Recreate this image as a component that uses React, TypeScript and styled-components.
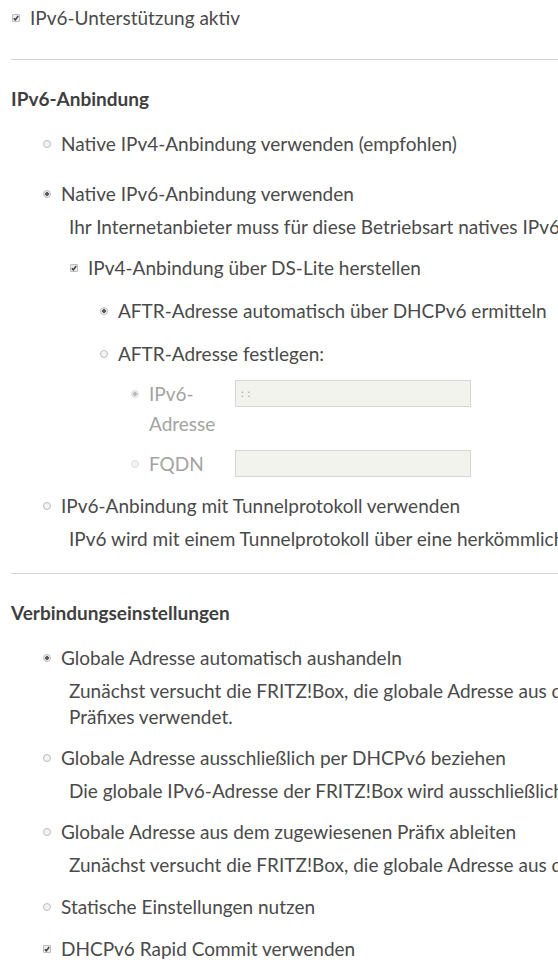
import React from 'react';
import styled, { createGlobalStyle } from 'styled-components';

const GlobalStyle = createGlobalStyle`
  html, body {
    margin: 0;
    padding: 0;
    background: #ffffff;
    overflow: hidden;
  }
  body {
    font-family: Lato, 'Open Sans', sans-serif;
    color: #4a4a4a;
    font-size: 19px;
  }
`;

const Page = styled.div`
  width: 100vw;
  overflow: hidden;
  padding: 3px 0 0 11px;
  box-sizing: border-box;
`;

const Divider = styled.hr<{ $top?: number }>`
  border: 0;
  border-top: 1px solid #d4d4d4;
  margin: ${(p) => p.$top ?? 26}px 0 0 0;
  width: 100%;
`;

const Heading = styled.h3`
  margin: 24px 0 0 0;
  font-size: 19px;
  line-height: 30px;
  font-weight: 700;
  color: #3f3f3f;
`;

const Group = styled.div<{ $indent: number; $first?: boolean }>`
  margin-left: ${(p) => p.$indent}px;
  margin-top: ${(p) => (p.$first ? 15 : 0)}px;
`;

const Option = styled.label<{ $disabled?: boolean; $top?: number }>`
  display: flex;
  align-items: flex-start;
  margin-top: ${(p) => p.$top ?? 13}px;
  line-height: 30px;
  color: ${(p) => (p.$disabled ? '#a3a3a3' : '#4a4a4a')};
  white-space: nowrap;
`;

const ControlBox = styled.span`
  flex: none;
  width: 8px;
  height: 30px;
  margin-right: 10px;
  display: flex;
  align-items: center;
`;

const Radio = styled.span<{ $checked?: boolean; $disabled?: boolean }>`
  width: 8px;
  height: 8px;
  box-sizing: border-box;
  border-radius: 50%;
  border: 1px solid ${(p) => (p.$disabled ? '#dddddd' : '#bdbdbd')};
  background: ${(p) =>
    p.$checked
      ? `radial-gradient(circle, ${p.$disabled ? '#bbbbbb' : '#5a5a5a'} 0 1.6px, #e9e9e9 2px)`
      : '#f3f3f3'};
`;

const Check = styled.span`
  width: 8px;
  height: 8px;
  box-sizing: border-box;
  border: 1px solid #bdbdbd;
  border-radius: 1px;
  background: #ececec;
  display: flex;
  align-items: center;
  justify-content: center;
  svg {
    display: block;
  }
`;

const Description = styled.div<{ $bottom?: number }>`
  margin: 5px 0 ${(p) => p.$bottom ?? 2}px 26px;
  line-height: 26px;
  white-space: nowrap;
`;

const FieldRow = styled.div<{ $top: number }>`
  display: flex;
  align-items: flex-start;
  margin-top: ${(p) => p.$top}px;
  color: #a3a3a3;
  line-height: 30px;
`;

const FieldLabel = styled.span`
  width: 76px;
  margin-right: 10px;
  flex: none;
`;

const Input = styled.input`
  width: 236px;
  height: 27px;
  box-sizing: border-box;
  margin-top: 1px;
  border: 1px solid #d6d6d2;
  background: #f3f3ee;
  padding: 0 3px;
  font-family: 'DejaVu Sans Mono', monospace;
  font-size: 11px;
  color: #b5b5b5;
  &::placeholder {
    color: #b5b5b5;
  }
`;

const CheckIcon = () => (
  <Check>
    <svg width="6" height="6" viewBox="0 0 6 6">
      <path d="M0.8 3.2 L2.3 4.8 L5.2 1" stroke="#3a3a3a" strokeWidth="1.4" fill="none" />
    </svg>
  </Check>
);

type RadioOptionProps = {
  checked?: boolean;
  disabled?: boolean;
  top?: number;
  children: React.ReactNode;
};

const RadioOption = ({ checked, disabled, top, children }: RadioOptionProps) => (
  <Option $disabled={disabled} $top={top}>
    <ControlBox>
      <Radio $checked={checked} $disabled={disabled} />
    </ControlBox>
    <span>{children}</span>
  </Option>
);

const CheckOption = ({ children, top }: { children: React.ReactNode; top?: number }) => (
  <Option $top={top}>
    <ControlBox>
      <CheckIcon />
    </ControlBox>
    <span>{children}</span>
  </Option>
);

export default function App() {
  return (
    <>
      <GlobalStyle />
      <Page>
        <Group $indent={1}>
          <CheckOption top={0}>IPv6-Unterstützung aktiv</CheckOption>
        </Group>
        <Divider />

        <Heading>IPv6-Anbindung</Heading>
        <Group $indent={32} $first>
          <RadioOption top={0}>Native IPv4-Anbindung verwenden (empfohlen)</RadioOption>
          <RadioOption checked top={20}>
            Native IPv6-Anbindung verwenden
          </RadioOption>
          <Description>
            Ihr Internetanbieter muss für diese Betriebsart natives IPv6 unterstützen.
          </Description>
          <Group $indent={27}>
            <CheckOption>IPv4-Anbindung über DS-Lite herstellen</CheckOption>
            <Group $indent={30}>
              <RadioOption checked>AFTR-Adresse automatisch über DHCPv6 ermitteln</RadioOption>
              <RadioOption>AFTR-Adresse festlegen:</RadioOption>
              <Group $indent={31}>
                <FieldRow $top={10}>
                  <ControlBox>
                    <Radio $checked $disabled />
                  </ControlBox>
                  <FieldLabel>IPv6-Adresse</FieldLabel>
                  <Input placeholder="::" disabled />
                </FieldRow>
                <FieldRow $top={10}>
                  <ControlBox>
                    <Radio $disabled />
                  </ControlBox>
                  <FieldLabel>FQDN</FieldLabel>
                  <Input disabled />
                </FieldRow>
              </Group>
            </Group>
          </Group>
          <RadioOption top={12}>IPv6-Anbindung mit Tunnelprotokoll verwenden</RadioOption>
          <Description>
            IPv6 wird mit einem Tunnelprotokoll über eine herkömmliche IPv4-Verbindung übertragen.
          </Description>
        </Group>
        <Divider $top={21} />

        <Heading>Verbindungseinstellungen</Heading>
        <Group $indent={32} $first>
          <RadioOption checked top={0}>
            Globale Adresse automatisch aushandeln
          </RadioOption>
          <Description $bottom={4}>
            Zunächst versucht die FRITZ!Box, die globale Adresse aus dem zugewiesenen Präfix abzuleiten. Gelingt dies nicht, wird eine Adresse außerhalb des
            <br />
            Präfixes verwendet.
          </Description>
          <RadioOption>Globale Adresse ausschließlich per DHCPv6 beziehen</RadioOption>
          <Description>
            Die globale IPv6-Adresse der FRITZ!Box wird ausschließlich per DHCPv6 bezogen.
          </Description>
          <RadioOption>Globale Adresse aus dem zugewiesenen Präfix ableiten</RadioOption>
          <Description>
            Zunächst versucht die FRITZ!Box, die globale Adresse aus dem zugewiesenen Präfix abzuleiten.
          </Description>
          <RadioOption top={14}>Statische Einstellungen nutzen</RadioOption>
          <CheckOption top={12}>DHCPv6 Rapid Commit verwenden</CheckOption>
        </Group>
      </Page>
    </>
  );
}
